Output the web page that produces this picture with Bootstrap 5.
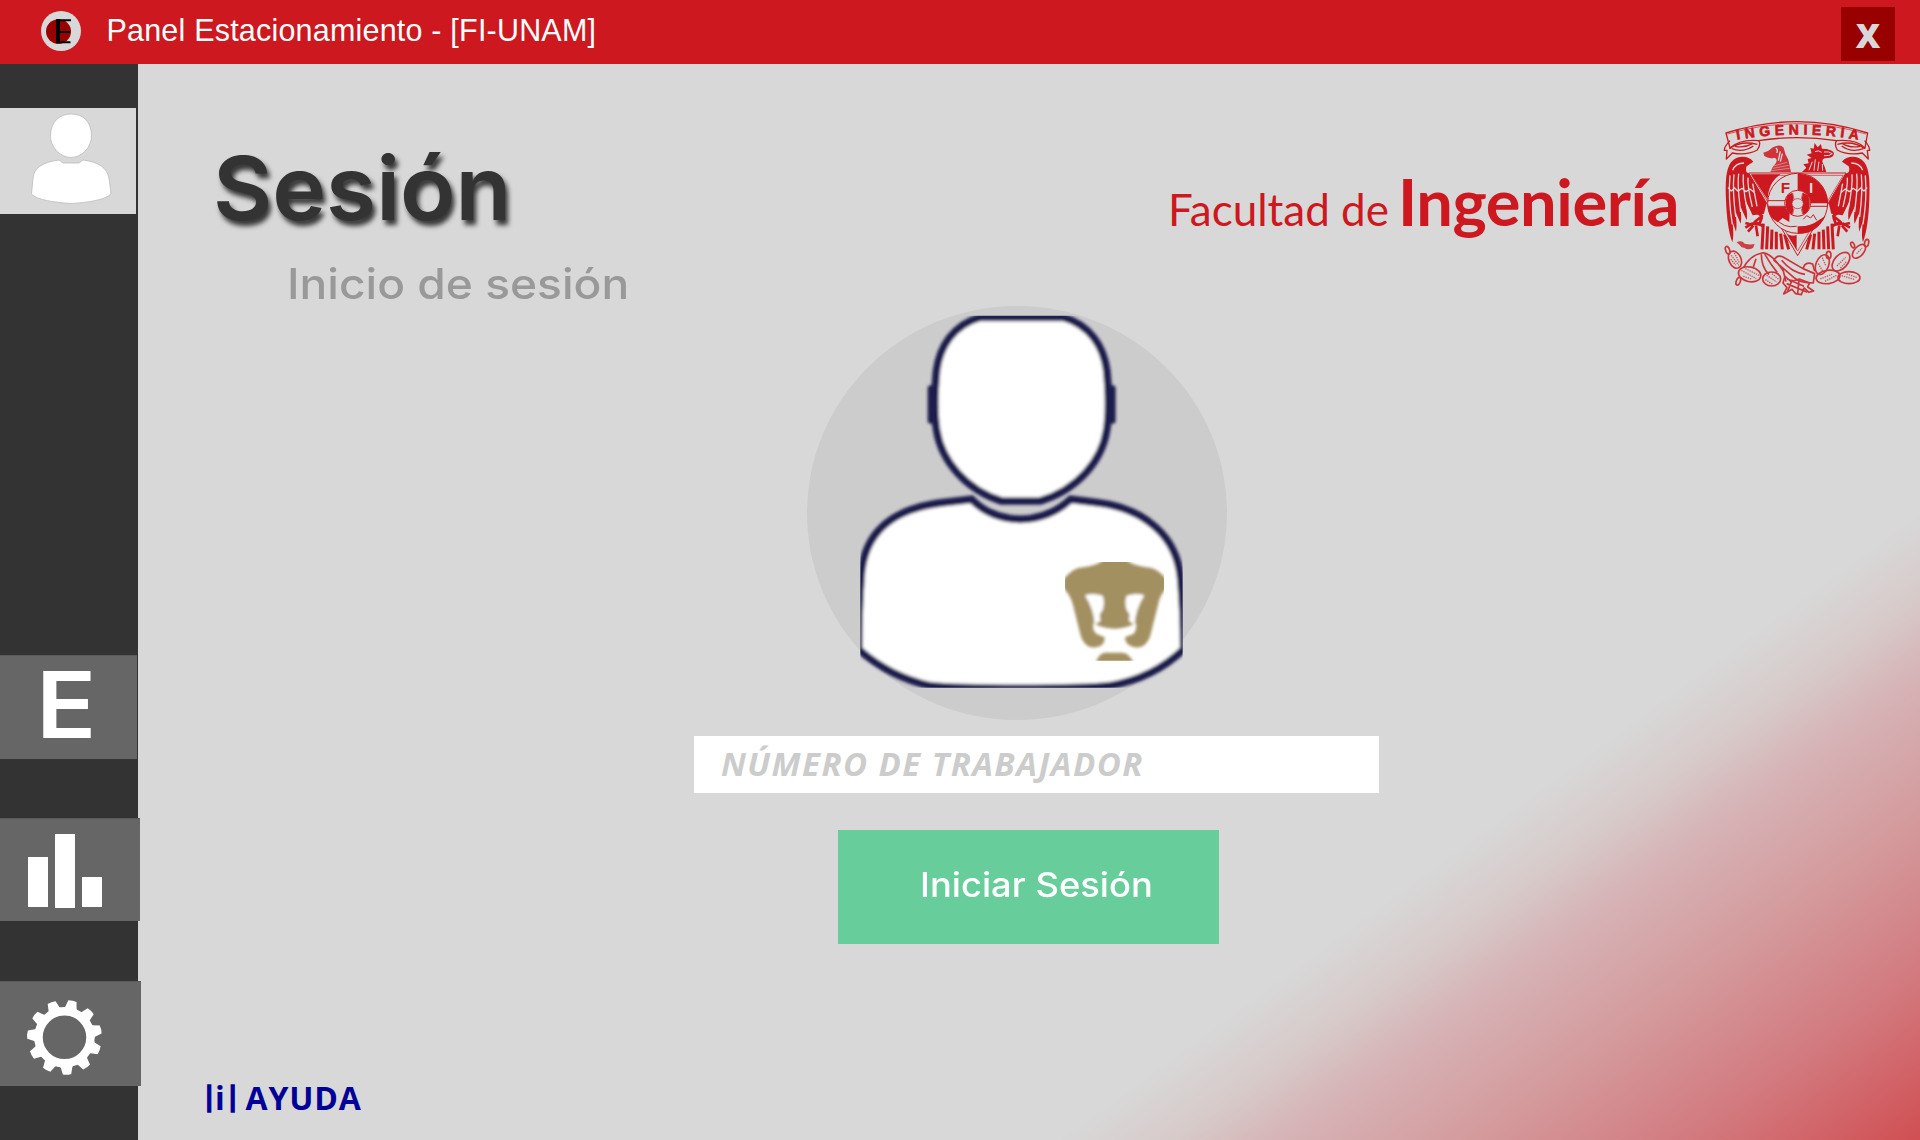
<!DOCTYPE html>
<html lang="es">
<head>
<meta charset="utf-8">
<title>Panel Estacionamiento</title>
<link href="https://cdn.jsdelivr.net/npm/bootstrap@5.3.0/dist/css/bootstrap.min.css" rel="stylesheet">
<style>
  html, body { height: 1140px; overflow: hidden; }
  body { background: #d8d8d8; font-family: "Inter", "Open Sans", sans-serif; }
  .topbar { height: 64px; background: #cc181e; }
  .topbar-logo { width: 40px; height: 40px; margin: 11px 25.5px 0 41px; }
  .topbar-title { font: 30.5px/61px "Liberation Sans", sans-serif; color: #fff; letter-spacing: .2px; }
  .close-btn { width: 54px; height: 54px; margin: 7px 25px 0 0; background: #900; color: #d8d8d8; border-radius: 0; font: 800 34px/54px "Open Sans", sans-serif; }
  .side { width: 138px; height: 1076px; background: #333; z-index: 1; }
  .side-item { background: #666; border-top: 1px solid #5a5a5a; }
  .side-user { width: 136px; height: 106px; margin-top: 44px; background: #d8d8d8; border: 0; }
  .side-e { width: 137px; height: 104px; margin-top: 441px; padding-left: 36px; color: #fff; font: 600 92px/97px "Inter", sans-serif; text-decoration: none; }
  .side-chart { width: 140px; height: 103px; margin-top: 59px; }
  .side-gear { width: 141px; height: 105px; margin-top: 60px; }
  .stage { height: 1076px; background: linear-gradient(143.9deg, #d8d8d8 calc(100% - 508px), #d7cbca calc(100% - 442px), #d6b4b7 calc(100% - 380px), #d49b9d calc(100% - 266px), #d27a7f calc(100% - 136px), #d04f53 100%); }
  .head-row { height: 242px; }
  .titles { padding: 80px 0 0 75px; }
  .big-title { font-size: 88px; line-height: 88px; font-weight: 600; color: #333; text-shadow: 3px 5px 5px rgba(0,0,0,.75); }
  .sub-title { font-size: 42.5px; line-height: 44px; font-weight: 500; color: #999; margin: 30px 0 0 74px; }
  .wide-text { display: inline-block; transform-origin: left center; }
  .wide-xs { transform: scaleX(1.035); }
  .wide-md { transform: scaleX(1.085); }
  .brand { font-family: "Lato", sans-serif; color: #cc181e; margin-top: 105px; white-space: nowrap; width: 552px; }
  .brand-a { font-size: 44px; line-height: 65px; width: 230px; }
  .brand-b { font-size: 65px; line-height: 65px; font-weight: 700; letter-spacing: -.45px; }
  .crest { width: 153.3px; height: 183.3px; margin: 52.7px 46.7px 0 0; }
  .avatar { width: 420px; height: 414px; margin-left: 669px; }
  .worker-input { width: 685px; height: 57px; margin: 16px 0 0 556px; padding: 0 0 2px 27px; border: 0; border-radius: 0; background: #fff; font: italic 700 33px "Open Sans", sans-serif; letter-spacing: 1.45px; }
  .worker-input::placeholder { color: #ccc; opacity: 1; }
  .login-btn { width: 380.5px; height: 113.5px; margin: 37px 0 0 700px; padding: 0 0 3px 82px; border: 0; border-radius: 0; background: #67ce9b; color: #fff; text-align: left; font-size: 33.5px; line-height: 109px; font-weight: 500; }
  .help { margin: 132px 0 0 64px; color: #009; font: 700 32px/44px "Open Sans", sans-serif; text-decoration: none; letter-spacing: .8px; word-spacing: -2px; white-space: pre; }
  .help-bar { font-size: 26px; line-height: 1; vertical-align: 4px; margin-right: -2.2px; -webkit-text-stroke: 1.4px #009; }
</style>
</head>
<body>
<header class="topbar d-flex">
  <svg class="topbar-logo flex-shrink-0" viewBox="0 0 40 40">
    <circle cx="20" cy="20" r="20" fill="#d8d8d8"/>
    <ellipse cx="17.5" cy="20.500" rx="12.5" ry="12.3" fill="#900"/>
    <path d="M15.700 9.200H30M15.700 21H29M15.700 31.200H29.500" stroke="#000" stroke-width="2"/><path d="M17 8.200V32.200" stroke="#000" stroke-width="4"/>
  </svg>
  <span class="topbar-title">Panel Estacionamiento - [FI-UNAM]</span>
  <button class="close-btn btn p-0 ms-auto" type="button">X</button>
</header>
<div class="d-flex">
  <nav class="side d-flex flex-column flex-shrink-0 position-relative">
    <a class="side-item side-user d-block flex-shrink-0" href="#">
      <svg class="d-block" width="136" height="106" viewBox="0 0 136 106" fill="#fff" stroke="#bbb" stroke-width=".8">
        <path d="M71 6C83 6 91 13 91.500 27C92 40 81 49.500 71 49.500C61 49.500 50 40 50.500 27C51 13 60 6 71 6Z"/>
        <path d="M59 52C43 54 34 60 33 70L31.500 86C37 92 55 94.500 71 95.500C88 94.500 105 92 111 86L109 70C107 60 99 54 83 52L79 55H63Z"/>
      </svg>
    </a>
    <a class="side-item side-e d-block flex-shrink-0" href="#"><span class="wide-text wide-md">E</span></a>
    <a class="side-item side-chart d-block flex-shrink-0" href="#">
      <svg class="d-block" width="140" height="102" viewBox="0 1 140 102" fill="#fff"><path d="M28 39h20v50H28zM55 16h20v74H55zM82 59h20v30H82z"/></svg>
    </a>
    <a class="side-item side-gear d-block flex-shrink-0" href="#">
      <svg class="d-block" width="141" height="104" viewBox="0 1 141 104">
        <g transform="translate(64.500 56.300)">
          <circle r="26" fill="none" stroke="#fff" stroke-width="8.500"/>
          <g fill="#fff" id="teeth"></g>
        </g>
      </svg>
    </a>
  </nav>
  <main class="stage flex-grow-1 d-flex flex-column align-items-start">
    <div class="head-row d-flex w-100">
      <div class="titles">
        <h1 class="big-title mb-0"><span class="wide-text wide-xs">Sesión</span></h1>
        <h2 class="sub-title mb-0"><span class="wide-text wide-md">Inicio de sesión</span></h2>
      </div>
      <div class="brand ms-auto d-flex align-items-baseline align-self-start">
        <span class="brand-a">Facultad de</span><span class="brand-b">Ingeniería</span>
      </div>
      <svg class="crest flex-shrink-0" viewBox="60 50 460 550" fill="none" stroke="#cc181e" stroke-width="4" stroke-linejoin="round">
        <defs>
          <path id="arc" d="M108 119Q292 86 478 119"/>
          <g id="wing">
            <path d="M160 184C146 166 112 163 93 186C77 208 76 245 78 300C80 350 85 395 97 426C103 400 98 385 98 365L108 394C112 375 108 355 107 335L122 370C126 350 122 335 121 318L140 360C144 340 138 325 136 300L158 345L192 340L202 300L150 218C140 222 135 210 140 198Z" fill="#cc181e" stroke="none"/>
            <path d="M90 225C86 270 90 330 97 372M102 222C98 260 102 310 107 350M116 220C111 255 118 300 122 335M130 222C127 255 134 290 141 325M144 232C142 260 150 290 157 320M158 250L171 318M84 262l10 10 10-9 10 10 12-9 12 10 12-8 12 10M98 210q8-22 34-22" stroke="#d8d8d8" stroke-width="4"/>
            <path d="M168 335l18 12-22 18 25 12M186 350l-8 22-22-2-20 12M160 374l-24-6M160 376l-16 18M168 376l5 32" stroke-width="8"/>
            <path d="M190 370l-4 77M203 378l-3 69M216 388l-2 59M229 394v53M242 400l5 47M254 402l12 45" stroke-width="9"/>
          </g>
        </defs>
        <path d="M78 98Q292 30 503 98L495 143Q470 116 410 121Q290 103 176 121Q120 116 90 143Z" fill="#d8d8d8"/>
        <path d="M83 101Q292 39 498 101" stroke-width="2"/>
        <path d="M90 121Q72 140 73 150L81 150 79 176 97 158Q140 166 172 149Q184 131 176 121M88 145Q122 120 172 132M95 145Q130 158 160 137M105 138Q132 144 158 130M494 121Q510 140 509 150L502 150 505 176 487 158Q442 166 412 149Q402 131 410 121M495 145Q460 120 412 132M490 145Q454 158 425 137M480 138Q450 144 428 130" stroke-width="4"/>
        <text font-family="Liberation Sans, sans-serif" font-weight="700" font-size="42" fill="#cc181e" stroke-width="2"><textPath href="#arc" textLength="366" startOffset="3">INGENIERIA</textPath></text>
        <use href="#wing"/><use href="#wing" transform="translate(586 0) scale(-1 1)"/>
        <path d="M190 157Q207 153 219 141Q241 130 251 142Q254 160 265 178L273 215H211Q218 197 228 188Q234 173 222 172Q211 177 193 167Z" fill="#cc181e" stroke="none" opacity=".85"/>
        <path d="M228 143Q235 150 230 158M241 153L235 181M247 160L241 184" stroke="#d8d8d8" stroke-width="4"/>
        <path d="M218 204l48-9M221 197l40-11M213 211l56-7" stroke="#d8d8d8" stroke-width="1.500"/>
        <path d="M331 143l10 2 3-17 9 13 10-10 3 14 14 1Q402 151 402 160Q400 174 374 174Q360 178 374 199L379 215H306l13-13-9-10 16-3-3-13 12-3-15-10 15-4Z" fill="#cc181e" stroke="none"/>
        <path d="M372 155q14-3 25 5-9 8-25 6M345 154q10-6 20 2M337 184l-10 26M346 177l-4 34M357 184l-4 28M367 191l1 20" stroke="#d8d8d8" stroke-width="3"/>
        <path d="M146 218H438L293 466Z" fill="#d8d8d8" stroke-width="3"/>
        <path d="M153 222H242Q205 245 203 298ZM260 400Q275 410 290 404V450Z" fill="#cc181e" stroke="none"/>
        <path d="M155 225H430L293 452Z" stroke-width="2"/>
        <circle cx="293" cy="309" r="90" fill="#d8d8d8" stroke-width="3"/>
        <path d="M293 220A90 90 0 0 1 383 309H325A32 32 0 0 0 293 277ZM203 319H262Q265 330 269 338L268 365 248 353 233 366Q205 350 203 319ZM293 400V378Q330 380 356 360L377 346Q350 402 293 400Z" fill="#cc181e" stroke="none"/>
        <path d="M203 301H260V318H203M324 301H383V318H324M224 351Q250 386 290 378M310 357L320 346 332 353 340 343 350 360" stroke-width="3"/>
        <circle cx="293" cy="309" r="39" fill="#d8d8d8" stroke-width="3"/>
        <path d="M262 285l15-8q8 30 0 66l-14-9q-12-22-1-49ZM324 285l-15-8q-8 30 0 66l14-9q12-22 1-49Z" fill="#cc181e" stroke="none"/>
        <ellipse cx="293" cy="310" rx="17" ry="15" fill="#d8d8d8" stroke-width="2"/><path d="M278 278l4 18M308 278l-4 18M278 342l4-17M308 342l-4-17" stroke-width="2"/>
        <text x="242" y="279" font-family="Liberation Sans, sans-serif" font-weight="700" font-size="46" fill="#cc181e" stroke="none">F</text>
        <text x="327" y="279" font-family="Liberation Sans, sans-serif" font-weight="700" font-size="46" fill="#d8d8d8" stroke="none">I</text>
        <path d="M110 426q15-8 24 4 15 4 30 1l-5 12q-16 8-26-1-8 2-14-8Z" fill="#cc181e" stroke="none" opacity=".8"/>
        <g stroke-width="5" opacity=".85">
          <ellipse cx="83" cy="450" rx="6" ry="12" transform="rotate(-20 83 450)"/>
          <ellipse cx="105" cy="478" rx="18" ry="27" transform="rotate(-24 105 478)"/>
          <ellipse cx="149" cy="522" rx="34" ry="22" transform="rotate(12 149 522)"/>
          <ellipse cx="215" cy="536" rx="27" ry="21"/>
          <ellipse cx="115" cy="543" rx="6" ry="12" transform="rotate(22 115 543)"/>
          <path d="M130 503Q150 465 186 458Q212 455 250 512L258 544M168 475L160 500M184 462Q184 500 207 523M194 461Q210 490 232 517M222 480Q230 462 249 470L309 505 344 520 340 548Q300 548 282 532ZM245 480Q275 517 315 522M310 503q5-20 28-12l6 22"/>
          <ellipse cx="367" cy="493" rx="19" ry="31" transform="rotate(22 367 493)"/>
          <ellipse cx="386" cy="464" rx="7" ry="11"/>
          <ellipse cx="384" cy="530" rx="36" ry="20" transform="rotate(-8 384 530)"/>
          <ellipse cx="447" cy="532" rx="33" ry="18"/>
          <ellipse cx="423" cy="484" rx="20" ry="33" transform="rotate(42 423 484)"/>
          <ellipse cx="477" cy="453" rx="14" ry="25" transform="rotate(42 477 453)"/>
          <ellipse cx="500" cy="428" rx="6" ry="11" transform="rotate(12 500 428)"/>
          <ellipse cx="458" cy="434" rx="5" ry="9" transform="rotate(-25 458 434)"/>
          <path d="M255 528l18 16 25-8 31 12-6 12 18 12-14 4-15-13-8 20-17-3-11-13-25 14 10-19-12-14ZM260 550l62 26M277 538l-14 34M297 538l-4 44M262 536l50 22"/>
        </g>
        <path d="M94 465l22 30M103 458l15 29M92 477l15 17M124 510l45 25M136 505l43 21M130 528l24 8M200 525l30 20M216 520l20 17M196 538l22 14M355 490l14 24M367 472l10 23M361 536l35-14M375 543l35-18M425 526l40 12M440 521l32 11M411 497l26-26M421 503l20-20M470 460l16-16" stroke-width="4" stroke-dasharray="4 3" opacity=".7"/>
      </svg>
    </div>
    <svg class="avatar flex-shrink-0" viewBox="81 48 1260 1242">
      <defs>
        <clipPath id="frame"><rect x="241" y="77" width="967" height="1116"/></clipPath>
        <clipPath id="badgeClip"><rect x="855" y="816" width="297" height="296"/></clipPath>
        <filter id="soft" x="-5%" y="-5%" width="110%" height="110%"><feGaussianBlur stdDeviation="5"/></filter>
      </defs>
      <ellipse cx="711" cy="669" rx="630" ry="621" fill="#ccc"/>
      <g clip-path="url(#frame)">
        <g filter="url(#soft)" stroke="#1c1a4e" stroke-width="23" fill="#fff">
          <path d="M243 865C250 720 345 655 490 638L575 628Q630 686 722 688Q810 686 872 628L950 638C1095 655 1190 740 1202 865C1208 930 1211 1000 1211 1078Q1120 1165 990 1187C900 1198 540 1198 450 1187Q330 1160 236 1078C236 1000 238 930 243 865Z"/>
          <path d="M600 82C520 105 480 170 470 240C463 310 462 370 470 420C485 515 560 600 665 633H780C890 600 965 515 980 420C988 370 987 310 980 240C970 170 930 105 850 82Z"/>
          <path d="M452 295V392M998 295V392" stroke-width="18" stroke-linecap="round"/>
        </g>
      </g>
      <g clip-path="url(#badgeClip)">
        <g filter="url(#soft)">
          <path d="M972 805H1036Q1050 828 1115 834Q1140 842 1160 870V895Q1140 912 1134 945L1110 1040Q1096 1076 1064 1072Q1035 1066 1035 1042L1060 1032Q1072 1020 1068 1000Q1035 1016 1005 1016Q970 1016 940 1000Q936 1022 950 1032L974 1042Q975 1070 948 1072Q916 1076 903 1040L879 945Q870 912 850 895V870Q870 842 895 834Q960 828 972 805ZM948 1120Q955 1085 985 1088H1025Q1050 1088 1060 1120Z" fill="#a39061"/>
          <path d="M915 916Q938 908 968 917Q976 940 967 962Q955 970 962 992L944 1004Q942 960 915 916ZM1093 916Q1068 908 1040 917Q1032 940 1041 962Q1053 970 1046 992L1064 1004Q1066 960 1093 916Z" fill="#fff"/>
        </g>
      </g>
    </svg>
    <input class="worker-input form-control flex-shrink-0" type="text" placeholder="NÚMERO DE TRABAJADOR">
    <button class="login-btn btn flex-shrink-0" type="button"><span class="wide-text wide-md">Iniciar Sesión</span></button>
    <a class="help" href="#"><span class="help-bar">|</span>i<span class="help-bar">|</span> AYUDA</a>
  </main>
</div>
<script src="https://cdn.jsdelivr.net/npm/bootstrap@5.3.0/dist/js/bootstrap.bundle.min.js"></script>
<script>
  // Eleven evenly spaced gear teeth, the first one pointing almost straight down
  const teeth = document.getElementById('teeth');
  for (let i = 0; i < 11; i++) {
    const t = document.createElementNS('http://www.w3.org/2000/svg', 'path');
    t.setAttribute('d', 'M27-8.500L30-5.800L37-4.200Q38 0 37 4.200L30 5.800L27 8.500Z');
    t.setAttribute('transform', 'rotate(' + (86 + i * 360 / 11) + ')');
    teeth.appendChild(t);
  }
</script>
</body>
</html>
